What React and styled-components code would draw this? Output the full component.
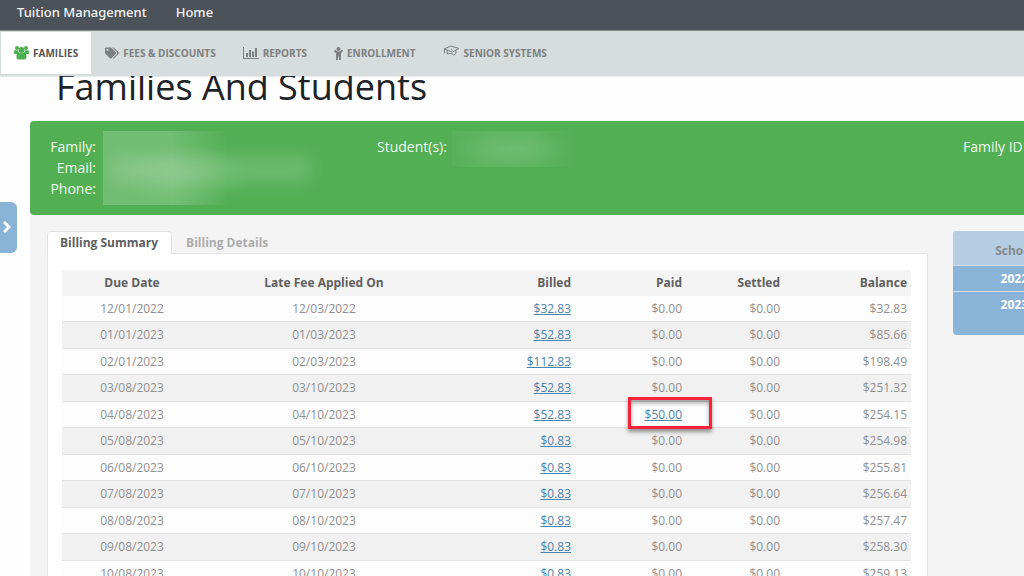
import React, { useState } from "react";
import styled, { createGlobalStyle } from "styled-components";
import { FaTags } from "react-icons/fa";

const navItems = [
  { id: "families", label: "Families", icon: <UsersIcon /> },
  { id: "fees", label: "Fees & Discounts", icon: <FaTags size={14} /> },
  { id: "reports", label: "Reports", icon: <ChartIcon /> },
  { id: "enrollment", label: "Enrollment", icon: <ChildIcon /> },
  { id: "senior", label: "Senior Systems", icon: <CapIcon /> },
];

const bills = [
  { due: "12/01/2022", late: "12/03/2022", billed: "$32.83", paid: "$0.00", balance: "$32.83" },
  { due: "01/01/2023", late: "01/03/2023", billed: "$52.83", paid: "$0.00", balance: "$85.66" },
  { due: "02/01/2023", late: "02/03/2023", billed: "$112.83", paid: "$0.00", balance: "$198.49" },
  { due: "03/08/2023", late: "03/10/2023", billed: "$52.83", paid: "$0.00", balance: "$251.32" },
  { due: "04/08/2023", late: "04/10/2023", billed: "$52.83", paid: "$50.00", balance: "$254.15" },
  { due: "05/08/2023", late: "05/10/2023", billed: "$0.83", paid: "$0.00", balance: "$254.98" },
  { due: "06/08/2023", late: "06/10/2023", billed: "$0.83", paid: "$0.00", balance: "$255.81" },
  { due: "07/08/2023", late: "07/10/2023", billed: "$0.83", paid: "$0.00", balance: "$256.64" },
  { due: "08/08/2023", late: "08/10/2023", billed: "$0.83", paid: "$0.00", balance: "$257.47" },
  { due: "09/08/2023", late: "09/10/2023", billed: "$0.83", paid: "$0.00", balance: "$258.30" },
  { due: "10/08/2023", late: "10/10/2023", billed: "$0.83", paid: "$0.00", balance: "$259.13" },
];

function UsersIcon() {
  return (
    <svg width="15" height="14" viewBox="0 0 30 28" fill="currentColor" aria-hidden="true">
      <circle cx="6" cy="4" r="4" />
      <circle cx="24" cy="4" r="4" />
      <circle cx="15" cy="8" r="6" />
      <path d="M0 13c0-3 1-5 3-5 2 1 4 1 5 0 0 3 1 5 3 6-2 0-3 1-4 2H3c-2 0-3-1-3-3z" />
      <path d="M30 13c0-3-1-5-3-5-2 1-4 1-5 0 0 3-1 5-3 6 2 0 3 1 4 2h4c2 0 3-1 3-3z" />
      <path d="M5 22c0-5 1-9 5-9 3 2 7 2 10 0 4 0 5 4 5 9 0 3-1 5-4 5H9c-3 0-4-2-4-5z" />
    </svg>
  );
}

function ChartIcon() {
  return (
    <svg width="16" height="12" viewBox="0 0 32 24" fill="currentColor" aria-hidden="true">
      <path d="M0 0h2v22h30v2H0z" />
      <path d="M6 12h4v8H6zM12 6h4v14h-4zM18 9h4v11h-4zM24 2h4v18h-4z" />
    </svg>
  );
}

function ChildIcon() {
  return (
    <svg width="9" height="13" viewBox="0 0 18 26" fill="currentColor" aria-hidden="true">
      <circle cx="9" cy="4" r="4" />
      <path d="M2 5l5 4h4l5-4 2 3-4 5v13h-4v-7H8v7H4V13L0 8z" />
    </svg>
  );
}

function CapIcon() {
  return (
    <svg width="17" height="17" viewBox="0 0 34 34" fill="none" stroke="currentColor" strokeWidth="2" aria-hidden="true">
      <path d="M2 8l14-6 16 5-13 7z" />
      <path d="M8 11l1 7c4-2 9-1 12 2l5-3v-6M19 10l-3-2M3 9v8" />
    </svg>
  );
}

const App = () => {
  const [page, setPage] = useState("families");
  const [tab, setTab] = useState("summary");

  return (
    <Shell>
      <GlobalStyle />
      <Header>
        <TopBar>
          <a href="#tuition">Tuition Management</a>
          <a href="#home">Home</a>
        </TopBar>
        <Nav>
          {navItems.map((item) => (
            <NavItem
              key={item.id}
              href={`#${item.id}`}
              $active={page === item.id}
              onClick={() => setPage(item.id)}
            >
              {item.icon}
              {item.label}
            </NavItem>
          ))}
        </Nav>
      </Header>

      <Drawer type="button" aria-label="Open side menu">
        <svg width="9" height="13" viewBox="0 0 9 13" fill="none" stroke="currentColor" strokeWidth="3">
          <path d="M1 1l5 5-5 5" />
        </svg>
      </Drawer>

      <Main>
        <Title>Families And Students</Title>
        <FamilyCard>
          <Contact>
            <ContactLabels>
              <span>Family:</span>
              <span>Email:</span>
              <span>Phone:</span>
            </ContactLabels>
            <ContactMask />
          </Contact>
          <Students>
            <span>Student(s):</span>
            <StudentMask />
          </Students>
          <FamilyId>Family ID</FamilyId>
        </FamilyCard>

        <Body>
          <Billing>
            <Tabs role="tablist">
              <Tab
                type="button"
                role="tab"
                aria-selected={tab === "summary"}
                $active={tab === "summary"}
                onClick={() => setTab("summary")}
              >
                Billing Summary
              </Tab>
              <Tab
                type="button"
                role="tab"
                aria-selected={tab === "details"}
                $active={tab === "details"}
                onClick={() => setTab("details")}
              >
                Billing Details
              </Tab>
            </Tabs>
            <Panel>
              <Table>
                <colgroup>
                  <col width="140" />
                  <col width="244" />
                  <col width="129" />
                  <col width="111" />
                  <col width="98" />
                  <col width="127" />
                </colgroup>
                <thead>
                  <tr>
                    <th>Due Date</th>
                    <th>Late Fee Applied On</th>
                    <th>Billed</th>
                    <th>Paid</th>
                    <th>Settled</th>
                    <th>Balance</th>
                  </tr>
                </thead>
                <tbody>
                  {bills.map((bill) => (
                    <tr key={bill.due}>
                      <td>{bill.due}</td>
                      <td>{bill.late}</td>
                      <td>
                        <a href="#billed">{bill.billed}</a>
                      </td>
                      {bill.paid === "$0.00" ? (
                        <td>{bill.paid}</td>
                      ) : (
                        <MarkedCell>
                          <a href="#paid">{bill.paid}</a>
                        </MarkedCell>
                      )}
                      <td>$0.00</td>
                      <td>{bill.balance}</td>
                    </tr>
                  ))}
                </tbody>
              </Table>
            </Panel>
          </Billing>

          <Years>
            <h2>School Year</h2>
            <a href="#2022">2022-2023</a>
            <a href="#2023">2023-2024</a>
          </Years>
        </Body>
      </Main>
    </Shell>
  );
};

const GlobalStyle = createGlobalStyle`
  * {
    box-sizing: border-box;
  }
  body {
    margin: 0;
    background-color: #fefefe;
    font-family: "Open Sans", "Noto Sans", sans-serif;
    font-size: 12px;
    color: #909090;
  }
`;

const Shell = styled.div`
  min-height: 100vh;
  overflow-x: clip;
`;

const Header = styled.header`
  position: sticky;
  top: 0;
  z-index: 2;
`;

const TopBar = styled.div`
  display: flex;
  gap: 29px;
  height: 31px;
  padding: 0 17px;
  background-color: #4b525a;
  border-bottom: 1px solid #84898d;
  a {
    color: #f4f4f4;
    font-family: "Noto Sans", sans-serif;
    font-size: 13px;
    font-weight: 500;
    line-height: 24px;
    text-decoration: none;
  }
`;

const Nav = styled.nav`
  display: flex;
  gap: 1px;
  height: 45px;
  padding: 1px 1px 2px;
  background-color: #d7dcdc;
  box-shadow: 0 1px 1px rgba(0, 0, 0, 0.08);
`;

const NavItem = styled.a`
  display: flex;
  align-items: center;
  gap: 4px;
  padding: 0 13px;
  font-size: 10px;
  font-weight: 700;
  text-transform: uppercase;
  text-decoration: none;
  color: ${({ $active }) => ($active ? "#555" : "#7c8080")};
  background-color: ${({ $active }) => ($active ? "#fff" : "transparent")};
  svg {
    color: ${({ $active }) => ($active ? "#4caf50" : "inherit")};
  }
`;

const Drawer = styled.button`
  position: fixed;
  top: 202px;
  left: 0;
  z-index: 1;
  display: flex;
  align-items: center;
  justify-content: center;
  width: 17px;
  height: 51px;
  padding: 0 2px 0 0;
  border: none;
  border-radius: 0 6px 6px 0;
  background-color: #8ab3d8;
  color: #fff;
  cursor: pointer;
`;

/* the work area keeps its room for the side list on narrow windows */
const Main = styled.main`
  min-width: 1124px;
  padding-left: 30px;
`;

const Title = styled.h1`
  margin: -14px 0 9px 26px;
  font-size: 36px;
  font-weight: 400;
  line-height: 50px;
  color: #1c2226;
`;

const FamilyCard = styled.section`
  display: flex;
  padding: 10px 17px;
  border-radius: 4px 0 0 4px;
  background-color: #52af54;
  color: #eef8ee;
  font-size: 14px;
  line-height: 21px;
`;

const Contact = styled.div`
  display: flex;
  gap: 7px;
  width: 330px;
  height: 74px;
`;

const ContactLabels = styled.div`
  display: flex;
  flex-direction: column;
  width: 49px;
  padding-top: 5px;
  text-align: right;
`;

const ContactMask = styled.div`
  position: relative;
  flex: 1;
  overflow: hidden;
  background:
    radial-gradient(closest-side, rgba(255, 255, 255, 0.1), transparent) 20px 14px / 130px 66px no-repeat,
    linear-gradient(to right, rgba(255, 255, 255, 0.18) 25%, transparent 46%);
  &::after {
    content: "";
    position: absolute;
    inset: 24px 66px 22px 10px;
    background-color: rgba(255, 255, 255, 0.14);
    filter: blur(8px);
  }
`;

const Students = styled.div`
  display: flex;
  flex: 1;
  gap: 5px;
  span {
    margin-top: 5px;
  }
`;

const StudentMask = styled.div`
  width: 124px;
  height: 36px;
  background:
    radial-gradient(closest-side, rgba(255, 255, 255, 0.1), transparent),
    linear-gradient(to right, rgba(255, 255, 255, 0.03), rgba(255, 255, 255, 0.08) 30%, rgba(255, 255, 255, 0.08) 65%, transparent);
`;

const FamilyId = styled.div`
  width: 144px;
  padding-top: 5px;
`;

const Body = styled.div`
  display: flex;
  align-items: flex-start;
  gap: 25px;
  padding: 16px 17px;
  background-color: #f4f4f4;
`;

const Billing = styled.section`
  flex: 1;
`;

const Tabs = styled.div`
  display: flex;
  gap: 1px;
`;

const Tab = styled.button`
  position: relative;
  z-index: 1;
  height: 23px;
  margin-bottom: -1px;
  padding: 0 13px 2px 12px;
  border: 1px solid ${({ $active }) => ($active ? "#e2e2e2" : "transparent")};
  border-bottom: none;
  border-radius: 4px 4px 0 0;
  background-color: ${({ $active }) => ($active ? "#fff" : "transparent")};
  color: ${({ $active }) => ($active ? "#606060" : "#acacac")};
  font-family: inherit;
  font-size: 12px;
  font-weight: 700;
  cursor: pointer;
`;

const Panel = styled.div`
  padding: 16px 16px 16px 14px;
  background-color: #fff;
  border: 1px solid #e6e6e6;
`;

const Table = styled.table`
  width: 100%;
  table-layout: fixed;
  border-collapse: separate;
  border-spacing: 0;
  th,
  td {
    height: 26px;
    padding: 0 4px 0 0;
    text-align: right;
    line-height: 20px;
  }
  th {
    background-color: #f4f4f4;
    color: #606060;
  }
  td {
    background-color: #fdfdfd;
    border-bottom: 1px solid #e2e2e2;
  }
  tr:nth-child(even) td {
    height: 27px;
    background-color: #f1f1f1;
  }
  th:nth-child(-n + 2),
  td:nth-child(-n + 2) {
    padding: 0;
    text-align: center;
  }
  a {
    color: #4c84ac;
    text-underline-offset: 1px;
  }
`;

const MarkedCell = styled.td`
  position: relative;
  &::after {
    content: "";
    position: absolute;
    inset: -5px -26px -2px 53px;
    border: 3px solid #f5233c;
    box-shadow: 0 3px 4px rgba(0, 0, 0, 0.4), inset 0 3px 4px rgba(0, 0, 0, 0.35);
    pointer-events: none;
  }
`;

const Years = styled.aside`
  width: 154px;
  min-height: 104px;
  border-radius: 4px;
  overflow: hidden;
  background-color: #8ab3d8;
  text-align: center;
  h2 {
    margin: 0;
    padding: 8px 0 2px;
    background-color: #b5cde3;
    color: #868a8d;
    font-size: 12px;
    line-height: 24px;
  }
  a {
    display: block;
    border-top: 1px solid #d4dde5;
    color: #fff;
    font-weight: 700;
    line-height: 25px;
    text-decoration: none;
  }
`;

export default App;
